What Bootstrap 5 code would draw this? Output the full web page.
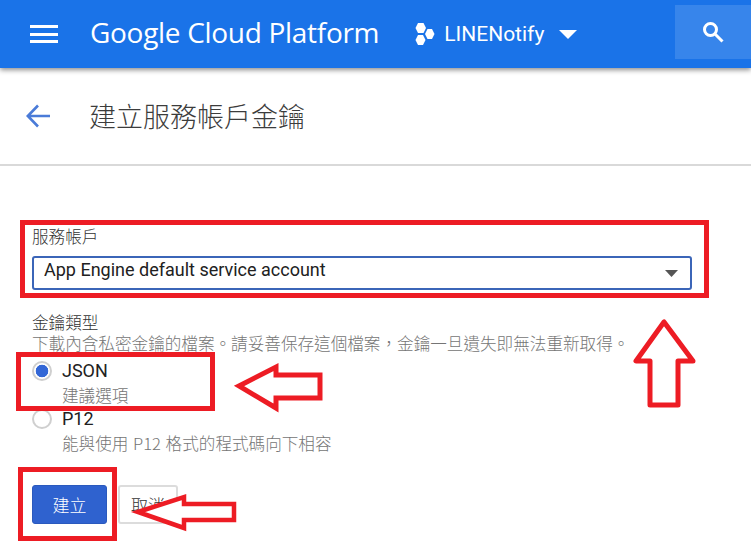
<!DOCTYPE html>
<html lang="zh-Hant">
<head>
<meta charset="utf-8">
<title>建立服務帳戶金鑰</title>
<link href="https://cdn.jsdelivr.net/npm/bootstrap@5.3.0/dist/css/bootstrap.min.css" rel="stylesheet">
<style>
html,body{height:556px;overflow:hidden;}
body{position:relative;font-family:Roboto,"Noto Sans CJK TC",sans-serif;color:#212121;background:#fff;}
.gcp-bar{height:68px;background:#1a73e8;box-shadow:0 2px 5px rgba(0,0,0,.45);position:relative;z-index:2;padding:0 0 0 30px;}
.gcp-menu{width:28px;height:18px;flex-direction:column;justify-content:space-between;}
.gcp-menu i{display:block;height:3px;background:#fff;}
.gcp-brand{font-family:"Open Sans",sans-serif;font-size:28px;letter-spacing:-.3px;color:#fff;margin:0 0 4px 32px;white-space:nowrap;line-height:1;}
.gcp-project{margin-left:36px;color:#fff;font-size:21px;line-height:1;}
.gcp-project span{margin:0 15px 0 9px;}
.gcp-search{position:absolute;right:0;top:5px;width:76px;height:54px;background:rgba(255,255,255,.13);}
.page-head{height:98px;border-bottom:2px solid #d9d9d9;padding-left:26px;}
.page-head h1{font-family:"Noto Sans CJK TC",sans-serif;font-weight:300;font-size:27px;color:#3c3c3c;margin:0 0 2px 39px;line-height:1;}
.key-form{padding:60px 59px 0 32px;}
.cjk-label{font-family:"Noto Sans CJK TC",sans-serif;font-weight:300;font-size:16.6px;line-height:20px;margin:0;color:#333;}
.key-select.form-select{height:34px;padding:0 10px 7px;margin-top:10px;font-size:18px;line-height:24px;color:#212121;border:2px solid #3b65b8;border-radius:3px;background-image:url("data:image/svg+xml,%3Csvg xmlns='http://www.w3.org/2000/svg' width='13' height='7'%3E%3Cpath d='M0 0h13L6.500 7z' fill='%23555'/%3E%3C/svg%3E");background-position:right 12px center;background-size:13px 7px;box-shadow:none;}
.hint{font-family:"Noto Sans CJK TC",sans-serif;font-weight:300;font-size:16.6px;word-spacing:1px;line-height:20px;color:#757575;margin:0;white-space:nowrap;}
.type-group{margin-top:22px;}
.type-group>.cjk-label{margin-bottom:1px;}
.radio-row{display:flex;align-items:flex-start;}
.radio-row .form-check-input{appearance:none;width:20px;height:20px;margin:0 10px 0 0;flex:none;border:2px solid #cfcfcf;border-radius:50%;background:#fff;box-shadow:none;}
.radio-row .form-check-input:checked{background:radial-gradient(circle,#3367d6 0 6px,#fff 6.6px);border-color:#cfcfcf;}
.radio-name{font-size:18px;line-height:20px;color:#212121;}
.radio-row .hint{margin-top:4px;}
.radio-one{margin-top:8px;}
.radio-two{margin-top:4px;}
.btn-row{margin-top:32px;gap:11px;}
.btn-create.btn{width:75px;height:39px;padding:0;background:#2f62cf;border:1px solid #2a59bd;border-radius:3px;color:#fff;font-family:"Noto Sans CJK TC",sans-serif;font-size:17px;font-weight:300;}
.btn-cancel.btn{width:60px;height:39px;padding:0;background:#fff;border:2px solid #dcdcdc;border-radius:3px;color:#333;font-family:"Noto Sans CJK TC",sans-serif;font-size:17px;font-weight:300;}
.marks{position:absolute;left:0;top:0;z-index:3;pointer-events:none;}
</style>
</head>
<body>
<header class="gcp-bar d-flex align-items-center">
  <div class="gcp-menu d-flex"><i></i><i></i><i></i></div>
  <div class="gcp-brand">Google Cloud Platform</div>
  <div class="gcp-project d-flex align-items-center">
    <svg width="20" height="22" viewBox="0 0 20 22" fill="#fff"><path d="M3 0h5.500L11 5 8.500 10H3L.5 5z"/><path d="M12.500 6h4.500l2.500 5-2.500 5h-4.500L10 11z"/><path d="M3 12h5l2.500 5L8 22H3L.5 17z"/></svg>
    <span>LINENotify</span>
    <svg width="18" height="9" viewBox="0 0 18 9" fill="#fff"><path d="M0 0h18L9 9z"/></svg>
  </div>
  <div class="gcp-search d-flex align-items-center justify-content-center">
    <svg width="22" height="22" viewBox="0 0 22 22" fill="none" stroke="#fff" stroke-width="3"><circle cx="8.500" cy="8.500" r="6"/><path d="M13 13l7.500 7.500"/></svg>
  </div>
</header>
<section class="page-head d-flex align-items-center">
  <svg width="24" height="24" viewBox="0 0 24 24" fill="none" stroke="#4a7bd8" stroke-width="2.600"><path d="M24 12H2M12 1.500L1.800 12 12 22.500"/></svg>
  <h1>建立服務帳戶金鑰</h1>
</section>
<form class="key-form">
  <label class="cjk-label d-block">服務帳戶</label>
  <select class="form-select key-select"><option>App Engine default service account</option></select>
  <div class="type-group">
    <div class="cjk-label">金鑰類型</div>
    <p class="hint">下載內含私密金鑰的檔案。請妥善保存這個檔案&#xFF0C;金鑰一旦遺失即無法重新取得。</p>
    <div class="radio-row radio-one">
      <input class="form-check-input" type="radio" name="kt" checked>
      <div><div class="radio-name">JSON</div><p class="hint">建議選項</p></div>
    </div>
    <div class="radio-row radio-two">
      <input class="form-check-input" type="radio" name="kt">
      <div><div class="radio-name">P12</div><p class="hint">能與使用 P12 格式的程式碼向下相容</p></div>
    </div>
  </div>
  <div class="btn-row d-flex">
    <button type="button" class="btn btn-create">建立</button>
    <button type="button" class="btn btn-cancel">取消</button>
  </div>
</form>
<svg class="marks" width="751" height="556" viewBox="0 0 751 556" fill="none" stroke="#ed1c24" stroke-width="5" stroke-linejoin="miter">
  <rect x="22.500" y="222.500" width="684" height="73"/>
  <rect x="18.500" y="354.500" width="194" height="54"/>
  <rect x="20.500" y="469.500" width="94" height="69"/>
  <path fill="#fff" stroke-linejoin="round" d="M664 322L636 361H650V405H678V361H693Z"/>
  <path fill="#fff" d="M239 386L276 367V375H320V398H276V408Z"/>
  <path fill="#fff" stroke-width="4.500" d="M138 512L184 497V504H234V520H184V528Z"/>
</svg>
<script src="https://cdn.jsdelivr.net/npm/bootstrap@5.3.0/dist/js/bootstrap.bundle.min.js"></script>
</body>
</html>
